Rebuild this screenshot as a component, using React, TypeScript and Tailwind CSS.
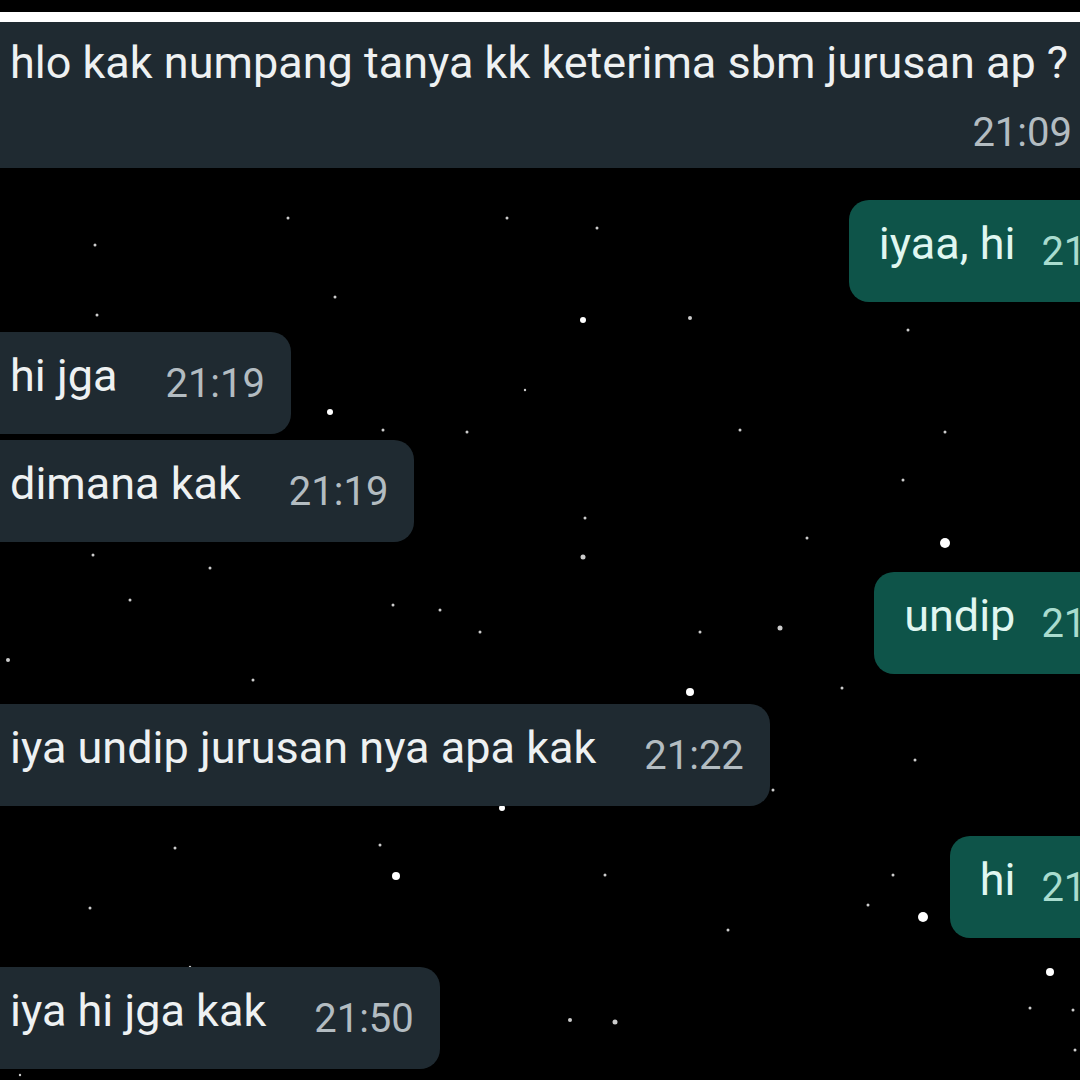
import React from "react";

const stars: [number, number, number][] = [
  [288, 218, 1.5], [507, 218, 1.5], [597, 228, 1.5], [95, 245, 1.5], [335, 297, 1.5], [97, 315, 1.5],
  [583, 320, 3], [690, 318, 2], [908, 330, 1.5], [330, 412, 3], [383, 430, 1.5], [467, 432, 1.5],
  [525, 390, 1.2], [740, 430, 1.5], [945, 432, 1.5], [903, 480, 1.5], [585, 518, 1.5], [807, 538, 1.5],
  [945, 543, 5], [583, 557, 2.5], [93, 555, 1.5], [210, 568, 1.5], [130, 600, 1.5], [393, 605, 1.5],
  [440, 610, 1.5], [480, 632, 1.5], [700, 632, 1.5], [780, 628, 2.5], [8, 660, 2], [253, 680, 1.5],
  [690, 692, 4], [842, 688, 1.5], [915, 760, 1.5], [773, 790, 1.5], [502, 808, 3], [175, 848, 1.5],
  [380, 845, 1.5], [396, 876, 4], [605, 875, 1.5], [893, 875, 1.5], [923, 917, 5], [90, 908, 1.5],
  [728, 930, 1.5], [190, 967, 1.2], [260, 1050, 1.5], [1050, 972, 4], [1030, 1008, 1.5], [570, 1020, 2],
  [615, 1022, 2.5], [1072, 842, 2], [1073, 1010, 1.5], [20, 1075, 1.2], [868, 905, 1.5], [1075, 1050, 1.5],
];

function In({ text, time, mt }: { text: string; time: string; mt: string }) {
  return (
    <div className={`flex ${mt}`}>
      <div className="ml-[-20px] flex h-[102px] items-center rounded-[20px] bg-[#1f2a31] pb-[16px] pl-[30px] pr-[26px]">
        <span className="text-[45px] leading-none text-[#eef1f2]">{text}</span>
        <span className="ml-[48px] mt-[18px] text-[40px] leading-none text-[#b3bcc1]">{time}</span>
      </div>
    </div>
  );
}

function Out({ text, mt }: { text: string; mt: string }) {
  return (
    <div className={`flex justify-end ${mt}`}>
      <div className="mr-[-91px] flex h-[102px] items-center rounded-[20px] bg-[#0e5449] pb-[16px] pl-[30px] pr-[30px]">
        <span className="text-[45px] leading-none text-[#e0f7f1]">{text}</span>
        <span className="ml-[26px] mt-[18px] text-[40px] leading-none text-[#a9dccf]">21:19</span>
      </div>
    </div>
  );
}

export default function App() {
  return (
    <div className="relative h-[1080px] w-[1080px] overflow-hidden bg-black font-['Roboto',sans-serif]">
      <svg className="absolute inset-0" width="1080" height="1080" viewBox="0 0 1080 1080">
        {stars.map(([x, y, r], i) => (
          <circle key={i} cx={x} cy={y} r={r} fill="#fff" opacity={r > 2.5 ? 1 : 0.8} />
        ))}
      </svg>
      <div className="relative flex flex-col">
        <div className="h-[12px] bg-black" />
        <div className="h-[10px] bg-white" />
        <div className="flex h-[146px] flex-col bg-[#1f2a31] pl-[10px] pr-[8px]">
          <div className="mt-[18px] whitespace-nowrap text-[45px] leading-none text-[#eef1f2]">
            hlo kak numpang tanya kk keterima sbm jurusan ap ?
          </div>
          <div className="mt-[28px] self-end text-[40px] leading-none text-[#b3bcc1]">21:09</div>
        </div>
        <Out text="iyaa, hi" mt="mt-[32px]" />
        <In text="hi jga" time="21:19" mt="mt-[30px]" />
        <In text="dimana kak" time="21:19" mt="mt-[6px]" />
        <Out text="undip" mt="mt-[30px]" />
        <In text="iya undip jurusan nya apa kak" time="21:22" mt="mt-[30px]" />
        <Out text="hi" mt="mt-[30px]" />
        <In text="iya hi jga kak" time="21:50" mt="mt-[29px]" />
      </div>
    </div>
  );
}
